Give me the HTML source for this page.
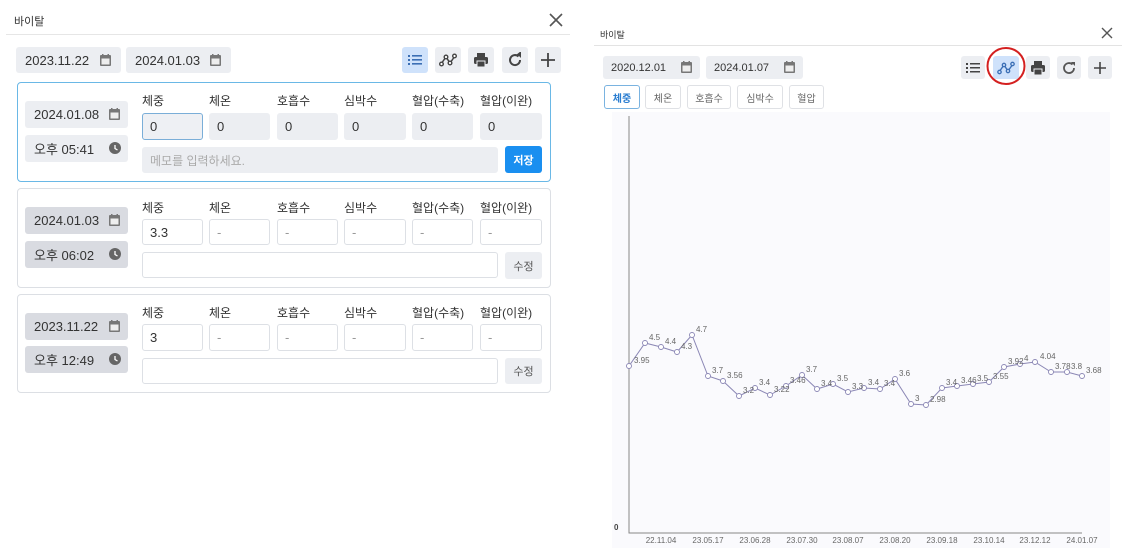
<!DOCTYPE html>
<html><head><meta charset="utf-8"><style>
*{margin:0;padding:0;box-sizing:border-box}
body{width:1123px;height:550px;background:#fff;position:relative;overflow:hidden;font-family:"Liberation Sans","Noto Sans CJK KR",sans-serif;color:#333}
.a{position:absolute}
.box{position:absolute;background:#eceef2;border-radius:3px;font-size:13px;color:#333;display:flex;align-items:center;padding-left:9px}
.inp{position:absolute;border:1px solid #dde0e5;border-radius:3px;background:#fff;font-size:13px;display:flex;align-items:center;padding-left:7px;color:#333}
.inp.g{background:#eceef2;border-color:#eceef2}
.lbl{position:absolute;font-size:12px;color:#333}
.card{position:absolute;border:1px solid #dcdfe4;border-radius:4px}
.btn{position:absolute;background:#eceef2;border-radius:3px;display:flex;align-items:center;justify-content:center}
.tab{position:absolute;border:1px solid #dfe1e5;border-radius:3px;font-size:10px;color:#666;display:flex;align-items:center;justify-content:center;height:24px;top:85px}
</style></head><body>
<!-- LEFT -->
<div class="a" style="left:14px;top:13px;font-size:11px">바이탈</div>
<svg class="a" style="left:549px;top:13px" width="14" height="14"><path d="M1 1L13 13M13 1L1 13" stroke="#555" stroke-width="1.6"/></svg>
<div class="a" style="left:6px;top:34px;width:564px;height:1px;background:#e6e6e6"></div>

<div class="box" style="left:16px;top:47px;width:105px;height:26px">2023.11.22</div>
<div class="box" style="left:126px;top:47px;width:105px;height:26px">2024.01.03</div>

<div class="btn" style="left:402px;top:47px;width:26px;height:26px;background:#cfe2fb"><svg width="14" height="12"><g fill="#3b6fb5"><rect x="0" y="1" width="2" height="2"/><rect x="0" y="5" width="2" height="2"/><rect x="0" y="9" width="2" height="2"/><rect x="4" y="1" width="10" height="1.6"/><rect x="4" y="5" width="10" height="1.6"/><rect x="4" y="9" width="10" height="1.6"/></g></svg></div>
<div class="btn" style="left:435px;top:47px;width:26px;height:26px"><svg width="18" height="14"><path d="M2 11L7 4L11 10L16 3" stroke="#444" stroke-width="1.5" fill="none"/><g fill="#fff" stroke="#444" stroke-width="1.4"><circle cx="2.5" cy="11" r="1.8"/><circle cx="7" cy="4" r="1.8"/><circle cx="11" cy="10" r="1.8"/><circle cx="15.5" cy="3" r="1.8"/></g></svg></div>
<div class="btn" style="left:468px;top:47px;width:26px;height:26px"><svg width="16" height="16"><rect x="4" y="1" width="8" height="4" fill="#444"/><rect x="1" y="5" width="14" height="7" rx="1.5" fill="#444"/><rect x="4" y="9" width="8" height="6" fill="#444" stroke="#eceef2" stroke-width="1"/></svg></div>
<div class="btn" style="left:502px;top:47px;width:26px;height:26px"><svg width="16" height="16"><path d="M13 8A5 5 0 1 1 11.5 4.5" stroke="#444" stroke-width="2" fill="none"/><path d="M9 3H14V-1Z" fill="#444"/><path d="M10 2L14 2L14 6Z" fill="#444"/></svg></div>
<div class="btn" style="left:535px;top:47px;width:26px;height:26px"><svg width="16" height="16"><path d="M8 1V15M1 8H15" stroke="#444" stroke-width="1.8"/></svg></div>

<!-- card1 -->
<div class="card" style="left:17px;top:82px;width:534px;height:100px;border-color:#6ab8e6"></div>
<div class="box" style="left:25px;top:101px;width:103px;height:27px">2024.01.08</div>
<div class="box" style="left:25px;top:135px;width:103px;height:27px">오후 05:41</div>
<div class="lbl" style="left:142px;top:92px">체중</div><div class="lbl" style="left:209px;top:92px">체온</div><div class="lbl" style="left:277px;top:92px">호흡수</div><div class="lbl" style="left:344px;top:92px">심박수</div><div class="lbl" style="left:412px;top:92px">혈압(수축)</div><div class="lbl" style="left:480px;top:92px">혈압(이완)</div>
<div class="inp g" style="left:142px;top:113px;width:61px;height:27px;border-color:#7aaed8;background:#eef0f4">0</div>
<div class="inp g" style="left:209px;top:113px;width:61px;height:27px">0</div>
<div class="inp g" style="left:277px;top:113px;width:61px;height:27px">0</div>
<div class="inp g" style="left:344px;top:113px;width:62px;height:27px">0</div>
<div class="inp g" style="left:412px;top:113px;width:61px;height:27px">0</div>
<div class="inp g" style="left:480px;top:113px;width:62px;height:27px">0</div>
<div class="inp g" style="left:142px;top:147px;width:356px;height:26px;color:#aaa;font-size:12px">메모를 입력하세요.</div>
<div class="a" style="left:505px;top:146px;width:37px;height:27px;background:#1a8ff0;border-radius:3px;color:#fff;font-size:11px;font-weight:bold;display:flex;align-items:center;justify-content:center">저장</div>

<!-- card2 -->
<div class="card" style="left:17px;top:188px;width:534px;height:100px"></div>
<div class="box" style="left:25px;top:207px;width:103px;height:27px;background:#d9dbe1">2024.01.03</div>
<div class="box" style="left:25px;top:241px;width:103px;height:27px;background:#d9dbe1">오후 06:02</div>
<div class="lbl" style="left:142px;top:199px">체중</div><div class="lbl" style="left:209px;top:199px">체온</div><div class="lbl" style="left:277px;top:199px">호흡수</div><div class="lbl" style="left:344px;top:199px">심박수</div><div class="lbl" style="left:412px;top:199px">혈압(수축)</div><div class="lbl" style="left:480px;top:199px">혈압(이완)</div>
<div class="inp" style="left:142px;top:219px;width:61px;height:26px">3.3</div>
<div class="inp" style="left:209px;top:219px;width:61px;height:26px;color:#999">-</div>
<div class="inp" style="left:277px;top:219px;width:61px;height:26px;color:#999">-</div>
<div class="inp" style="left:344px;top:219px;width:62px;height:26px;color:#999">-</div>
<div class="inp" style="left:412px;top:219px;width:61px;height:26px;color:#999">-</div>
<div class="inp" style="left:480px;top:219px;width:62px;height:26px;color:#999">-</div>
<div class="inp" style="left:142px;top:252px;width:356px;height:26px"></div>
<div class="btn" style="left:505px;top:252px;width:37px;height:27px;font-size:11px;color:#555">수정</div>

<!-- card3 -->
<div class="card" style="left:17px;top:294px;width:534px;height:99px"></div>
<div class="box" style="left:25px;top:313px;width:103px;height:27px;background:#d9dbe1">2023.11.22</div>
<div class="box" style="left:25px;top:346px;width:103px;height:27px;background:#d9dbe1">오후 12:49</div>
<div class="lbl" style="left:142px;top:304px">체중</div><div class="lbl" style="left:209px;top:304px">체온</div><div class="lbl" style="left:277px;top:304px">호흡수</div><div class="lbl" style="left:344px;top:304px">심박수</div><div class="lbl" style="left:412px;top:304px">혈압(수축)</div><div class="lbl" style="left:480px;top:304px">혈압(이완)</div>
<div class="inp" style="left:142px;top:324px;width:61px;height:27px">3</div>
<div class="inp" style="left:209px;top:324px;width:61px;height:27px;color:#999">-</div>
<div class="inp" style="left:277px;top:324px;width:61px;height:27px;color:#999">-</div>
<div class="inp" style="left:344px;top:324px;width:62px;height:27px;color:#999">-</div>
<div class="inp" style="left:412px;top:324px;width:61px;height:27px;color:#999">-</div>
<div class="inp" style="left:480px;top:324px;width:62px;height:27px;color:#999">-</div>
<div class="inp" style="left:142px;top:358px;width:356px;height:26px"></div>
<div class="btn" style="left:505px;top:358px;width:37px;height:26px;font-size:11px;color:#555">수정</div>

<!-- icons for left date/time boxes -->
<svg class="a" style="left:0;top:0" width="570" height="400">
<defs>
<g id="cal"><rect x="0" y="1" width="11" height="11" rx="1" fill="#777"/><rect x="1.5" y="4.5" width="8" height="6" fill="#eee"/><rect x="2" y="0" width="1.5" height="3" fill="#777"/><rect x="7.5" y="0" width="1.5" height="3" fill="#777"/></g>
<g id="clk"><circle cx="6" cy="6" r="6" fill="#666"/><path d="M6 3V6.5L8.5 8" stroke="#fff" stroke-width="1.3" fill="none"/></g>
</defs>
<use href="#cal" x="100" y="54"/><use href="#cal" x="210" y="54"/>
<use href="#cal" x="109" y="108"/><use href="#clk" x="109" y="142"/>
<use href="#cal" x="109" y="214"/><use href="#clk" x="109" y="248"/>
<use href="#cal" x="109" y="320"/><use href="#clk" x="109" y="353"/>
</svg>

<!-- RIGHT -->
<div class="a" style="left:600px;top:28px;font-size:9px">바이탈</div>
<svg class="a" style="left:1101px;top:27px" width="12" height="12"><path d="M1 1L11 11M11 1L1 11" stroke="#555" stroke-width="1.4"/></svg>
<div class="a" style="left:594px;top:45px;width:528px;height:1px;background:#e3e3e3"></div>
<div class="box" style="left:603px;top:56px;width:97px;height:23px;font-size:11px;padding-left:8px">2020.12.01</div>
<div class="box" style="left:706px;top:56px;width:97px;height:23px;font-size:11px;padding-left:8px">2024.01.07</div>
<svg class="a" style="left:0;top:0" width="1123" height="550">
<use href="#cal" x="681" y="61" transform="translate(0,0)"/>
<use href="#cal" x="784" y="61"/>
</svg>
<div class="btn" style="left:961px;top:56px;width:24px;height:23px"><svg width="14" height="12"><g fill="#444"><rect x="0" y="1" width="2" height="2"/><rect x="0" y="5" width="2" height="2"/><rect x="0" y="9" width="2" height="2"/><rect x="4" y="1" width="10" height="1.5"/><rect x="4" y="5" width="10" height="1.5"/><rect x="4" y="9" width="10" height="1.5"/></g></svg></div>
<div class="btn" style="left:993px;top:56px;width:26px;height:23px;background:#cfe2fb"><svg width="18" height="14"><path d="M2 11L7 4L11 10L16 3" stroke="#3b6fb5" stroke-width="1.4" fill="none"/><g fill="#cfe2fb" stroke="#3b6fb5" stroke-width="1.3"><circle cx="2.5" cy="11" r="1.7"/><circle cx="7" cy="4" r="1.7"/><circle cx="11" cy="10" r="1.7"/><circle cx="15.5" cy="3" r="1.7"/></g></svg></div>
<div class="btn" style="left:1026px;top:56px;width:24px;height:23px"><svg width="16" height="16"><rect x="4" y="1" width="8" height="4" fill="#444"/><rect x="1" y="5" width="14" height="7" rx="1.5" fill="#444"/><rect x="4" y="9" width="8" height="6" fill="#444" stroke="#eceef2"/></svg></div>
<div class="btn" style="left:1057px;top:56px;width:24px;height:23px"><svg width="16" height="16"><path d="M13 8A5 5 0 1 1 11.5 4.5" stroke="#555" stroke-width="1.8" fill="none"/><path d="M10 2L14 2L14 6Z" fill="#555"/></svg></div>
<div class="btn" style="left:1088px;top:56px;width:24px;height:23px"><svg width="14" height="14"><path d="M7 1V13M1 7H13" stroke="#444" stroke-width="1.6"/></svg></div>
<svg class="a" style="left:985px;top:45px" width="42" height="42"><ellipse cx="21" cy="21" rx="18.5" ry="18" fill="none" stroke="#d42020" stroke-width="2"/></svg>

<div class="tab" style="left:604px;width:36px;border-color:#7ab3e0;color:#2a7dd0;font-weight:bold">체중</div>
<div class="tab" style="left:645px;width:36px">체온</div>
<div class="tab" style="left:687px;width:44px">호흡수</div>
<div class="tab" style="left:737px;width:46px">심박수</div>
<div class="tab" style="left:789px;width:35px">혈압</div>

<div class="a" style="left:612px;top:112px;width:498px;height:436px;background:#fafafd"></div>
<svg class="a" style="left:0;top:0" width="1123" height="550" font-family="Liberation Sans, sans-serif">
<path d="M629 116V533H1082" stroke="#888" stroke-width="1" fill="none"/>
<text x="614" y="530" font-size="8" font-weight="bold" fill="#444">0</text>
<g font-size="8" fill="#666" text-anchor="middle">
<text x="661" y="543">22.11.04</text><text x="708" y="543">23.05.17</text><text x="755" y="543">23.06.28</text><text x="802" y="543">23.07.30</text><text x="848" y="543">23.08.07</text><text x="895" y="543">23.08.20</text><text x="942" y="543">23.09.18</text><text x="989" y="543">23.10.14</text><text x="1035" y="543">23.12.12</text><text x="1082" y="543">24.01.07</text>
</g>
<polyline fill="none" stroke="#8b87b5" stroke-width="1" points="629,366 645,343 661,347 677,352 692,335 708,376 723,381 739,396 755,388 770,395 786,386 802,375 817,389 833,384 848,392 864,388 880,389 895,379 911,404 926,405 942,388 957,386 973,384 989,382 1004,367 1020,364 1035,362 1051,372 1067,372 1082,376"/>
<g fill="#fff" stroke="#8b87b5" stroke-width="0.9">
<circle cx="629" cy="366" r="2.5"/><circle cx="645" cy="343" r="2.5"/><circle cx="661" cy="347" r="2.5"/><circle cx="677" cy="352" r="2.5"/><circle cx="692" cy="335" r="2.5"/><circle cx="708" cy="376" r="2.5"/><circle cx="723" cy="381" r="2.5"/><circle cx="739" cy="396" r="2.5"/><circle cx="755" cy="388" r="2.5"/><circle cx="770" cy="395" r="2.5"/><circle cx="786" cy="386" r="2.5"/><circle cx="802" cy="375" r="2.5"/><circle cx="817" cy="389" r="2.5"/><circle cx="833" cy="384" r="2.5"/><circle cx="848" cy="392" r="2.5"/><circle cx="864" cy="388" r="2.5"/><circle cx="880" cy="389" r="2.5"/><circle cx="895" cy="379" r="2.5"/><circle cx="911" cy="404" r="2.5"/><circle cx="926" cy="405" r="2.5"/><circle cx="942" cy="388" r="2.5"/><circle cx="957" cy="386" r="2.5"/><circle cx="973" cy="384" r="2.5"/><circle cx="989" cy="382" r="2.5"/><circle cx="1004" cy="367" r="2.5"/><circle cx="1020" cy="364" r="2.5"/><circle cx="1035" cy="362" r="2.5"/><circle cx="1051" cy="372" r="2.5"/><circle cx="1067" cy="372" r="2.5"/><circle cx="1082" cy="376" r="2.5"/>
</g>
<g font-size="8" fill="#666">
<text x="634" y="363">3.95</text><text x="649" y="340">4.5</text><text x="665" y="344">4.4</text><text x="681" y="349">4.3</text><text x="696" y="332">4.7</text><text x="712" y="373">3.7</text><text x="727" y="378">3.56</text><text x="743" y="393">3.2</text><text x="759" y="385">3.4</text><text x="774" y="392">3.22</text><text x="790" y="383">3.46</text><text x="806" y="372">3.7</text><text x="821" y="386">3.4</text><text x="837" y="381">3.5</text><text x="852" y="389">3.3</text><text x="868" y="385">3.4</text><text x="884" y="386">3.4</text><text x="899" y="376">3.6</text><text x="915" y="401">3</text><text x="930" y="402">2.98</text><text x="946" y="385">3.4</text><text x="961" y="383">3.46</text><text x="977" y="381">3.5</text><text x="993" y="379">3.55</text><text x="1008" y="364">3.92</text><text x="1024" y="361">4</text><text x="1040" y="359">4.04</text><text x="1055" y="369">3.78</text><text x="1071" y="369">3.8</text><text x="1086" y="373">3.68</text>
</g>
</svg>
</body></html>
